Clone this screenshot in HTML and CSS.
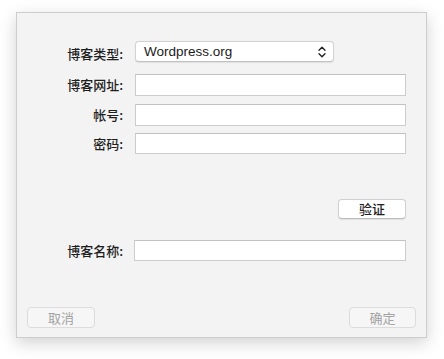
FILE: index.html
```html
<!DOCTYPE html>
<html lang="zh">
<head>
<meta charset="utf-8">
<link rel="stylesheet" href="styles.css">
</head>
<body>
<div class="window">
  <div class="form">
    <div class="label">博客类型:</div>
    <div class="popup">
      <span class="popup-text">Wordpress.org</span>
      <svg class="chev" width="8" height="12" viewBox="0 0 8 12"><path d="M1 4.2 L4 1.2 L7 4.2 M1 7.8 L4 10.8 L7 7.8" fill="none" stroke="#222" stroke-width="1.4" stroke-linecap="round" stroke-linejoin="round"/></svg>
    </div>
    <div class="label">博客网址:</div>
    <div class="field"></div>
    <div class="label">帐号:</div>
    <div class="field"></div>
    <div class="label">密码:</div>
    <div class="field f-last"></div>
  </div>
  <div class="verify-row"><div class="btn btn-verify">验证</div></div>
  <div class="form name-form">
    <div class="label">博客名称:</div>
    <div class="field f-name"></div>
  </div>
  <div class="footer">
    <div class="btn btn-disabled btn-cancel">取消</div>
    <div class="btn btn-disabled btn-ok">确定</div>
  </div>
</div>
</body>
</html>
```
FILE: styles.css
```css
html, body {
  margin: 0;
  padding: 0;
  background: #ffffff;
}
body {
  width: 444px;
  height: 359px;
  overflow: hidden;
  font-family: "Noto Sans CJK SC", "Liberation Sans", sans-serif;
}
.window {
  margin: 12px 0 0 16px;
  width: 409px;
  height: 324px;
  border: 1px solid #cdcdcd;
  background: #f3f3f3;
  box-shadow: 0 5px 16px rgba(0,0,0,0.18);
  box-sizing: content-box;
  padding: 0;
  display: flex;
  flex-direction: column;
}
.form {
  display: grid;
  grid-template-columns: 106px 271px;
  column-gap: 12px;
  row-gap: 8px;
  margin-top: 28px;
  align-items: center;
}
.label {
  text-align: right;
  font-size: 13px;
  font-weight: 500;
  color: #1e1e1e;
  line-height: 16px;
}
.popup {
  width: 199px;
  height: 21px;
  box-sizing: border-box;
  background: #fff;
  border: 1px solid #d2d2d2;
  border-bottom-color: #c2c2c2;
  border-radius: 4px;
  box-shadow: 0 0.5px 1px rgba(0,0,0,0.08);
  display: flex;
  align-items: center;
  justify-content: space-between;
  padding: 0 7px 0 8px;
  margin-bottom: 4px;
}
.popup-text {
  font-family: "Liberation Sans", sans-serif;
  font-size: 13.5px;
  color: #1a1a1a;
  line-height: 16px;
}
.chev { display: block; }
.field {
  height: 22px;
  box-sizing: border-box;
  background: #fff;
  border: 1px solid #cccccc;
  border-top-color: #c2c2c2;
}
.f-last { height: 21px; margin-top: -1px; }
.verify-row {
  display: flex;
  justify-content: flex-end;
  padding-right: 20px;
  margin-top: 45px;
}
.btn {
  height: 20px;
  box-sizing: border-box;
  background: #fff;
  border: 1px solid #d0d0d0;
  border-bottom-color: #bdbdbd;
  border-radius: 4px;
  box-shadow: 0 0.5px 1px rgba(0,0,0,0.08);
  font-size: 13px;
  font-weight: 500;
  color: #1e1e1e;
  line-height: 18px;
  text-align: center;
}
.btn-verify { width: 68px; }
.name-form { margin-top: 21px; grid-template-columns: 106px 272px; column-gap: 11px; }
.f-name { height: 21px; }
.footer {
  display: flex;
  justify-content: space-between;
  margin-top: 46px;
  padding: 0 10px 0 10px;
}
.btn-disabled {
  height: 21px;
  line-height: 19px;
  background: #f6f6f6;
  border-color: #dcdcdc;
  box-shadow: none;
  color: #a3a3a3;
  font-weight: 400;
}
.btn-cancel { width: 68px; }
.btn-ok { width: 67px; }
```
